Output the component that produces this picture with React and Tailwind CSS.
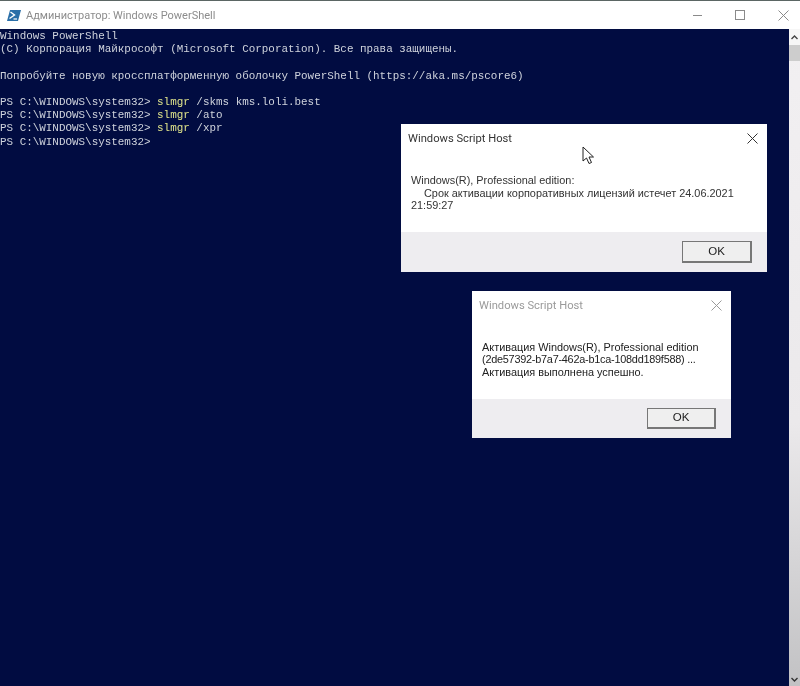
const mono = { fontFamily: '"Liberation Mono", monospace' };
const sans = { fontFamily: '"Liberation Sans", Arial, sans-serif' };
const roboto = { fontFamily: 'Roboto, "Liberation Sans", Arial, sans-serif' };

function Dialog({ title, titleClass, xClass, bodyClass, children, footerClass, btnClass, className }) {
  return (
    <div className={`absolute flex flex-col bg-white ${className}`} style={sans}>
      <div className={`flex items-center justify-between ${titleClass}`}>
        <span className="pt-[2px]" style={roboto}>{title}</span>
        <svg width="11" height="11" viewBox="0 0 11 11" className={xClass} fill="none" stroke="currentColor" strokeWidth="1">
          <path d="M0.5 0.5L10.5 10.5M10.5 0.5L0.5 10.5" />
        </svg>
      </div>
      <div className={bodyClass}>{children}</div>
      <div className={`flex items-center justify-end bg-[#eeedf0] ${footerClass}`}>
        <div className={`flex items-center justify-center border border-r-2 border-b-2 border-[#777777] bg-[#efefef] text-[11.5px] text-[#222] ${btnClass}`}>OK</div>
      </div>
    </div>
  );
}

export default function App() {
  return (
    <div className="relative flex h-[686px] w-[800px] flex-col overflow-hidden bg-[#010c41] blur-[0.35px]">
      <div className="h-[1px] bg-[#5b6664]" />
      <div className="flex h-[28px] items-center justify-between bg-white pl-[7px] pr-[6px]" style={roboto}>
        <div className="flex items-center gap-[5px]">
          <svg width="14" height="13" viewBox="0 0 14 13">
            <path d="M3 1H14L11 12H0Z" fill="#2a6fa8" />
            <path d="M3.5 3L7.5 6L2.5 9.5" fill="none" stroke="#fff" strokeWidth="1.4" />
            <path d="M6.5 10H10" stroke="#fff" strokeWidth="1.2" />
          </svg>
          <span className="pt-[2px] text-[11px] text-[#8c8c8c]">Администратор: Windows PowerShell</span>
        </div>
        <div className="flex items-center gap-[33px] pr-[5px] text-[#8a8a8a]">
          <div className="h-[1px] w-[9px] bg-[#8a8a8a]" />
          <div className="h-[10px] w-[10px] border border-[#8a8a8a]" />
          <svg width="11" height="11" viewBox="0 0 11 11" fill="none" stroke="currentColor"><path d="M0.5 0.5L10.5 10.5M10.5 0.5L0.5 10.5" /></svg>
        </div>
      </div>
      <div className="flex flex-1">
        <div className="flex-1 whitespace-pre pt-[1px] text-[10.92px] leading-[13.2px] text-[#cfd3dc]" style={mono}>
          <div>{'Windows PowerShell'}</div>
          <div>{'(C) Корпорация Майкрософт (Microsoft Corporation). Все права защищены.'}</div>
          <div>{' '}</div>
          <div>{'Попробуйте новую кроссплатформенную оболочку PowerShell (https://aka.ms/pscore6)'}</div>
          <div>{' '}</div>
          <div>PS C:\WINDOWS\system32&gt; <span className="text-[#dfe38a]">slmgr</span> /skms kms.loli.best</div>
          <div>PS C:\WINDOWS\system32&gt; <span className="text-[#dfe38a]">slmgr</span> /ato</div>
          <div>PS C:\WINDOWS\system32&gt; <span className="text-[#dfe38a]">slmgr</span> /xpr</div>
          <div>PS C:\WINDOWS\system32&gt;</div>
        </div>
        <div className="flex w-[11px] flex-col bg-gradient-to-b from-[#f2f0f2] via-[#ebe9eb] via-60% to-[#c2c2c4]">
          <div className="flex h-[16px] items-center justify-center bg-[#f6f6f6]">
            <svg width="7" height="5" viewBox="0 0 7 5" fill="none" stroke="#444" strokeWidth="1.4"><path d="M0.5 4L3.5 1L6.5 4" /></svg>
          </div>
          <div className="h-[16px] bg-[#cdcdcd]" />
          <div className="flex-1" />
          <div className="flex h-[14px] items-center justify-center">
            <svg width="7" height="5" viewBox="0 0 7 5" fill="none" stroke="#333" strokeWidth="1.4"><path d="M0.5 1L3.5 4L6.5 1" /></svg>
          </div>
        </div>
      </div>

      <Dialog
        title="Windows Script Host"
        className="left-[401px] top-[124px] h-[148px] w-[366px]"
        titleClass="h-[28px] pl-[7px] pr-[9px] text-[11.2px] text-[#333]"
        xClass="text-[#333]"
        bodyClass="h-[80px] pl-[10px] pr-[20px] pt-[22px] text-[10.9px] leading-[12.6px] text-[#333]"
        footerClass="h-[40px] pr-[15px]"
        btnClass="h-[22px] w-[70px]"
      >
        <div>Windows(R), Professional edition:</div>
        <div className="pl-[13px]">Срок активации корпоративных лицензий истечет 24.06.2021</div>
        <div>21:59:27</div>
      </Dialog>

      <Dialog
        title="Windows Script Host"
        className="left-[472px] top-[291px] h-[147px] w-[259px]"
        titleClass="h-[28px] pl-[7px] pr-[9px] text-[11.2px] text-[#9a9a9a]"
        xClass="text-[#9a9a9a]"
        bodyClass="h-[80px] pl-[10px] pt-[22px] text-[10.9px] leading-[12.4px] text-[#222]"
        footerClass="h-[39px] pr-[15px]"
        btnClass="h-[21px] w-[69px]"
      >
        <div>Активация Windows(R), Professional edition</div>
        <div className="tracking-[-0.25px]">(2de57392-b7a7-462a-b1ca-108dd189f588) ...</div>
        <div>Активация выполнена успешно.</div>
      </Dialog>

      <svg className="absolute left-[582px] top-[146px]" width="13" height="19" viewBox="0 0 13 19">
        <path d="M1 1V15L4.5 12L7 17.5L9.5 16.5L7 11H11.5Z" fill="#fff" stroke="#222" strokeWidth="1" />
      </svg>
    </div>
  );
}
